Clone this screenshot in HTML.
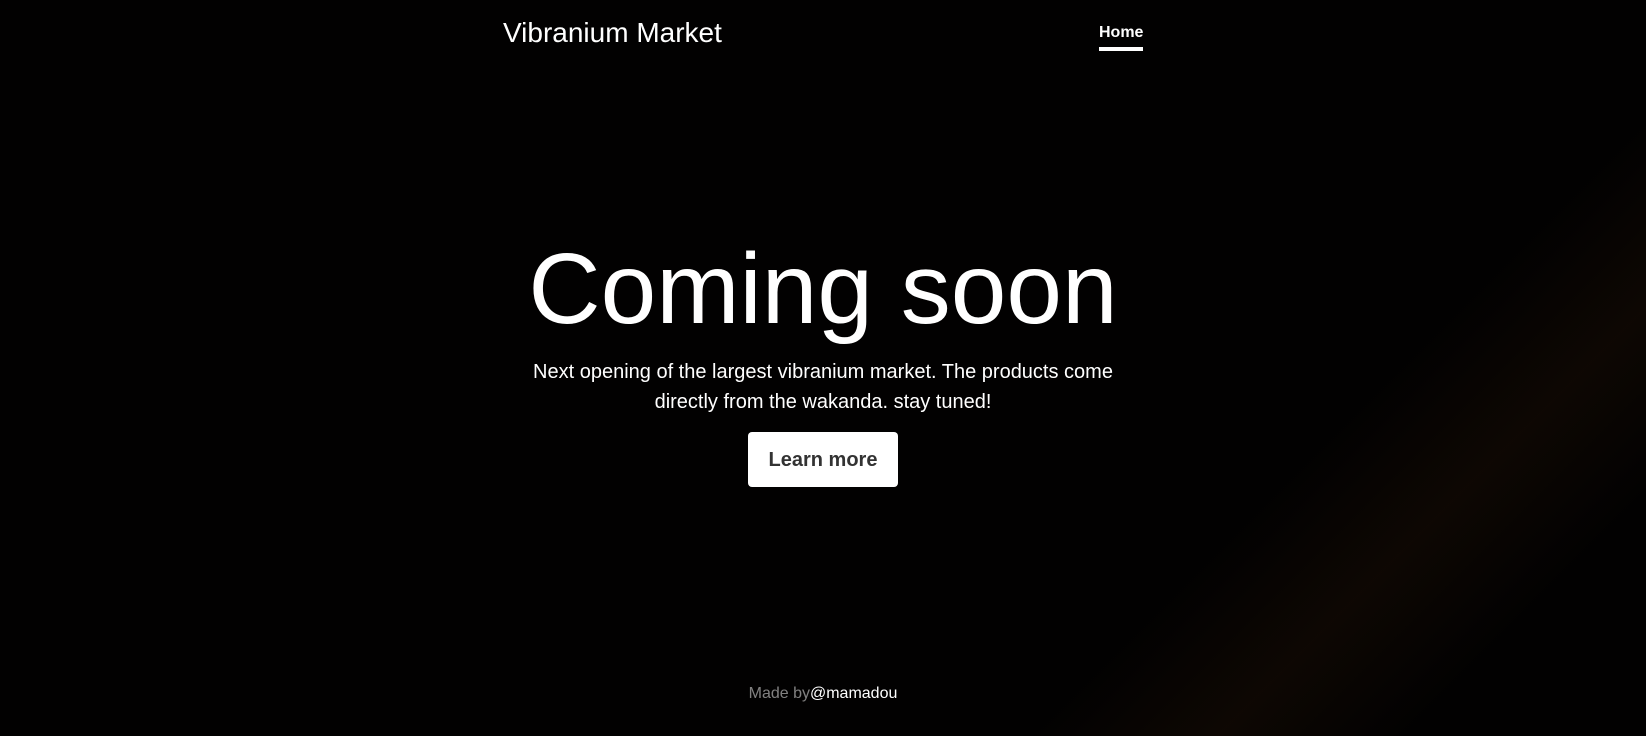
<!DOCTYPE html>
<html><head><meta charset="utf-8"><style>
html,body{margin:0;padding:0;width:1646px;height:736px;overflow:hidden;background:#020101;font-family:"Liberation Sans",Arial,sans-serif;color:#fff;}
.bg{position:absolute;inset:0;background:linear-gradient(135deg,rgba(0,0,0,0) 74%,rgba(40,22,8,0.3) 82%,rgba(0,0,0,0) 90%);}
.brand{position:absolute;left:503px;top:15px;font-size:28px;line-height:36px;}
.nav{position:absolute;left:1099px;top:23px;font-size:16px;font-weight:bold;line-height:20px;padding-bottom:4px;border-bottom:4px solid #fff;}
h1{position:absolute;left:0;right:0;top:229px;margin:0;text-align:center;font-size:100px;font-weight:400;line-height:120px;}
p{position:absolute;left:503px;width:640px;top:357px;margin:0;text-align:center;font-size:20px;line-height:30px;}
.btn{position:absolute;left:748px;top:432px;width:150px;height:55px;background:#fff;color:#333;border-radius:4px;font-size:20px;font-weight:bold;line-height:57px;text-align:center;}
.foot{position:absolute;left:0;right:0;top:685px;text-align:center;font-size:16px;color:rgba(255,255,255,.5);}
.foot span{color:#fff;}
</style></head><body>
<div class="bg"></div>
<div class="brand">Vibranium Market</div>
<div class="nav">Home</div>
<h1>Coming soon</h1>
<p>Next opening of the largest vibranium market. The products come directly from the wakanda. stay tuned!</p>
<div class="btn">Learn more</div>
<div class="foot">Made by<span>@mamadou</span></div>
</body></html>
